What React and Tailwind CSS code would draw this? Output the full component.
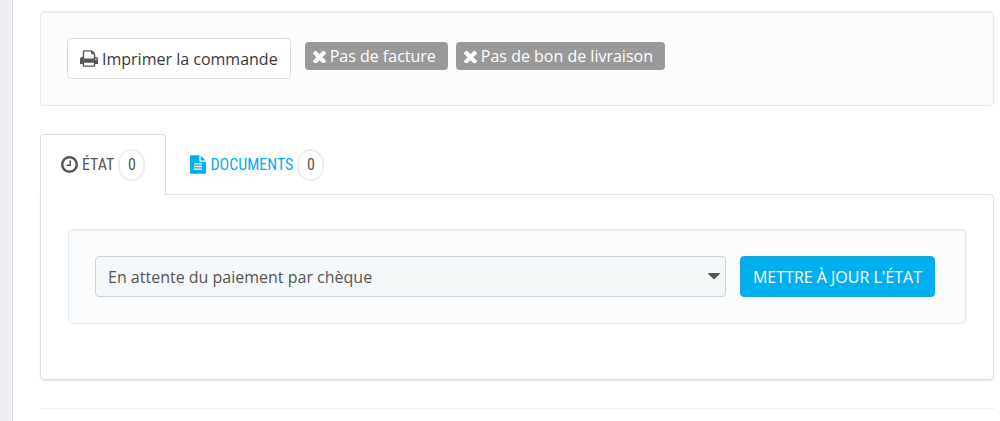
import { useState } from 'react';

const ICONS = {
  print: 'M448 1536h896v-256h-896v256zm0-640h896v-384h-160q-40 0-68-28t-28-68v-160h-640v640zm1152 64q0-26-19-45t-45-19-45 19-19 45 19 45 45 19 45-19 19-45zm128 0v416q0 13-9.5 22.5t-22.5 9.5h-224v160q0 40-28 68t-68 28h-960q-40 0-68-28t-28-68v-160h-224q-13 0-22.5-9.5t-9.5-22.5v-416q0-79 56.5-135.5t135.5-56.5h64v-544q0-40 28-68t68-28h672q40 0 88 20t76 48l152 152q28 28 48 76t20 88v256h64q79 0 135.5 56.5t56.5 135.5z',
  remove: 'M1490 1322q0 40-28 68l-136 136q-28 28-68 28t-68-28l-294-294-294 294q-28 28-68 28t-68-28l-136-136q-28-28-28-68t28-68l294-294-294-294q-28-28-28-68t28-68l136-136q28-28 68-28t68 28l294 294 294-294q28-28 68-28t68 28l136 136q28 28 28 68t-28 68l-294 294 294 294q28 28 28 68z',
  clock: 'M1024 544v448q0 14-9 23t-23 9h-320q-14 0-23-9t-9-23v-64q0-14 9-23t23-9h224v-352q0-14 9-23t23-9h64q14 0 23 9t9 23zm416 352q0-148-73-273t-198-198-273-73-273 73-198 198-73 273 73 273 198 198 273 73 273-73 198-198 73-273zm224 0q0 209-103 385.5t-279.5 279.5-385.5 103-385.5-103-279.5-279.5-103-385.5 103-385.5 279.5-279.5 385.5-103 385.5 103 279.5 279.5 103 385.5z',
  file: 'M1596 476q14 14 28 36h-472v-472q22 14 36 28zm-476 164h544v1056q0 40-28 68t-68 28h-1344q-40 0-68-28t-28-68v-1600q0-40 28-68t68-28h800v544q0 40 28 68t68 28zm160 736v-64q0-14-9-23t-23-9h-704q-14 0-23 9t-9 23v64q0 14 9 23t23 9h704q14 0 23-9t9-23zm0-256v-64q0-14-9-23t-23-9h-704q-14 0-23 9t-9 23v64q0 14 9 23t23 9h704q14 0 23-9t9-23zm0-256v-64q0-14-9-23t-23-9h-704q-14 0-23 9t-9 23v64q0 14 9 23t23 9h704q14 0 23-9t9-23z',
};

function Icon({ name, viewBox = '0 0 1792 1792', className }) {
  return (
    <svg viewBox={viewBox} fill="currentColor" aria-hidden="true" className={`shrink-0 ${className}`}>
      <path d={ICONS[name]} />
    </svg>
  );
}

function Well({ children }) {
  return (
    <div className="flex rounded border border-[#e1ebf3] bg-[#fbfcfe] p-[26px] shadow-[inset_0_1px_1px_rgba(0,0,0,0.05)]">
      {children}
    </div>
  );
}

function Label({ children }) {
  return (
    <span className="flex h-7 items-center gap-1 rounded bg-[#999] pr-3 pl-2 text-white">
      <Icon name="remove" viewBox="302 302 1188 1188" className="size-[13px]" />
      {children}
    </span>
  );
}

function Badge({ children }) {
  return (
    <span className="ml-1 flex h-8 w-[27px] items-center justify-center rounded-full border-2 border-[#eee] bg-white text-[#555]">
      {children}
    </span>
  );
}

export default function App() {
  const [tab, setTab] = useState('status');
  const [status, setStatus] = useState('cheque');

  const tabClass = (id) =>
    tab === id
      ? 'rounded-t border-[#ddd] border-b-white bg-white text-[#555]'
      : 'border-transparent text-[#00aff0]';

  return (
    <div className="flex min-h-screen bg-[#edeff2] font-['Open_Sans',sans-serif] text-[16px] leading-6 text-[#555]">
      <main className="ml-3 flex-1 border-l border-[#d3d8db] bg-white pt-[11px] pr-[6px] pl-[27px]">
        <Well>
          <button
            type="button"
            className="flex h-[41px] items-center gap-1 rounded border border-[#ddd] bg-white px-3 text-[#363a41]"
          >
            <Icon name="print" viewBox="64 128 1664 1536" className="h-[17px] w-[18px] text-[#555]" />
            Imprimer la commande
          </button>
          <div className="ml-[14px] flex gap-2 pt-1">
            <Label>Pas de facture</Label>
            <Label>Pas de bon de livraison</Label>
          </div>
        </Well>

        <div
          role="tablist"
          className="mt-7 flex font-['Ubuntu_Condensed','Roboto_Condensed','Open_Sans_Condensed',sans-serif]"
        >
          <button
            type="button"
            role="tab"
            aria-selected={tab === 'status'}
            onClick={() => setTab('status')}
            className={`-mb-px flex h-[61px] items-center border px-5 ${tabClass('status')}`}
          >
            <Icon name="clock" viewBox="128 128 1536 1536" className="mr-1 size-[17px]" />
            ÉTAT
            <Badge>0</Badge>
          </button>
          <button
            type="button"
            role="tab"
            aria-selected={tab === 'documents'}
            onClick={() => setTab('documents')}
            className={`-mb-px flex h-[61px] items-center border px-[23px] ${tabClass('documents')}`}
          >
            <Icon name="file" viewBox="128 0 1536 1792" className="mr-1 h-[19px] w-4" />
            DOCUMENTS
            <Badge>0</Badge>
          </button>
        </div>

        <div className="rounded-b rounded-tr border border-[#ddd] px-[27px] pt-[34px] pb-[55px] shadow-[0_1px_2px_rgba(0,0,0,0.1)]">
          <Well>
            <form className="mr-1 flex flex-1 gap-[14px]" onSubmit={(e) => e.preventDefault()}>
              <div className="relative flex flex-1">
                <select
                  aria-label="État de la commande"
                  value={status}
                  onChange={(e) => setStatus(e.target.value)}
                  className="h-[41px] w-full appearance-none rounded border border-[#c7d6db] bg-[#f5f8f9] pr-8 pl-3"
                >
                  <option value="cheque">En attente du paiement par chèque</option>
                  <option value="accepted">Paiement accepté</option>
                  <option value="shipped">Expédié</option>
                </select>
                <svg
                  viewBox="0 0 12 7"
                  aria-hidden="true"
                  className="pointer-events-none absolute top-[17px] right-[6px] h-[7px] w-3 fill-[#555]"
                >
                  <path d="M0.6 0h10.8q.8.2.3.9L6.6 6.1q-.6.5-1.2 0L.3.9Q-.2.2.6 0z" />
                </svg>
              </div>
              <button
                type="submit"
                className="h-[41px] rounded border border-[#1ba6d9] bg-[#00aff0] px-3 text-white"
              >
                METTRE À JOUR L'ÉTAT
              </button>
            </form>
          </Well>
        </div>

        <hr className="mt-7 border-[#eee]" />
      </main>
    </div>
  );
}
